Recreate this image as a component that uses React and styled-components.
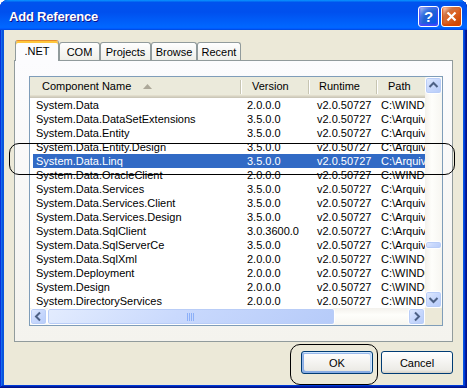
import React from "react";
import styled, { createGlobalStyle, css } from "styled-components";

const GlobalStyle = createGlobalStyle`
  html, body {
    margin: 0;
    padding: 0;
    background: #ffffff;
  }
  body {
    font-family: "Liberation Sans", Arial, sans-serif;
    font-size: 11px;
    color: #000;
    overflow: hidden;
  }
  * {
    box-sizing: border-box;
  }
`;

const Window = styled.div`
  position: relative;
  width: 467px;
  height: 388px;
  display: flex;
  flex-direction: column;
  padding-bottom: 3px;
  background: #0855dd;
  border-radius: 8px 8px 0 0;
  box-shadow: inset -1px -1px #00138c, inset 1px 1px #0831d9,
    inset -2px -2px #001ea0, inset 2px 2px #166aee, inset -3px -3px #003bda,
    inset 3px 3px #0855dd;
`;

const TitleBar = styled.div`
  flex: none;
  height: 30px;
  display: flex;
  align-items: center;
  padding: 2px 5px 0 9px;
  border-radius: 8px 8px 0 0;
  background: linear-gradient(
    180deg,
    #0997ff,
    #0053ee 8%,
    #0050ee 40%,
    #0066ff 88%,
    #0066ff 93%,
    #005bff 95%,
    #0047d9 100%
  );
`;

const Title = styled.div`
  flex: 1;
  color: #fff;
  font: bold 13px "Liberation Sans", Arial, sans-serif;
  text-shadow: 1px 1px #0f1089;
  letter-spacing: -0.2px;
`;

const TitleButtons = styled.div`
  display: flex;
  gap: 2px;
`;

const CaptionButton = styled.div`
  width: 21px;
  height: 21px;
  border: 1px solid #fff;
  border-radius: 3px;
  display: flex;
  align-items: center;
  justify-content: center;
  color: #fff;
  font: bold 15px "Liberation Sans", Arial, sans-serif;
  ${(p) =>
    p.$close
      ? css`
          background: radial-gradient(circle at 90% 90%, #cc4600 0, #dc6527 55%, #cd7546 70%, #ffccb2 90%, #fff 100%);
          box-shadow: inset 0 -1px 2px 1px #da4600;
        `
      : css`
          background: radial-gradient(circle at 90% 90%, #0054e9 0, #2263d5 55%, #4479e4 70%, #a3bbec 90%, #fff 100%);
          box-shadow: inset 0 -1px 2px 1px #4646ff;
        `}
`;

const Body = styled.div`
  flex: 1;
  margin: 0 4px;
  padding: 10px 10px 11px;
  display: flex;
  flex-direction: column;
  background: #ece9d8;
`;

const TabStrip = styled.div`
  position: relative;
  z-index: 1;
  height: 20px;
  display: flex;
  align-items: flex-end;
  padding-left: 1px;
`;

const Tab = styled.div`
  width: ${(p) => p.$width}px;
  height: ${(p) => (p.$active ? 21 : 18)}px;
  margin-bottom: ${(p) => (p.$active ? -1 : 0)}px;
  display: flex;
  align-items: center;
  justify-content: center;
  border: 1px solid #919b9c;
  border-bottom: none;
  border-radius: 3px 3px 0 0;
  white-space: nowrap;
  ${(p) =>
    p.$active
      ? css`
          border-top-color: #e68b2c;
          background: #fcfcfe;
          box-shadow: inset 0 2px #ffc73c;
          padding-bottom: 1px;
        `
      : css`
          background: linear-gradient(180deg, #fff, #fafaf9 26%, #f0f0ea 95%, #ecebe5);
          padding-top: 1px;
        `}
`;

const TabPanel = styled.div`
  height: 282px;
  border: 1px solid #919b9c;
  background: linear-gradient(180deg, #fcfcfe, #f4f3ee);
  padding: 15px 10px 15px 14px;
`;

const ListView = styled.div`
  width: 414px;
  height: 250px;
  border: 1px solid #7f9db9;
  background: #fff;
  display: grid;
  grid-template-columns: 395px 17px;
  grid-template-rows: 231px 17px;
`;

const Content = styled.div`
  overflow: hidden;
`;

const Header = styled.div`
  height: 21px;
  display: flex;
  background: #ebeadb;
  box-shadow: inset 0 -1px #cbc7b8, inset 0 -2px #d6d2c2, inset 0 -3px #e2decd;
`;

const HeaderCell = styled.div`
  position: relative;
  flex: none;
  width: ${(p) => p.$width}px;
  height: 18px;
  display: flex;
  align-items: center;
  padding-left: ${(p) => p.$pad}px;
  white-space: nowrap;
  &::after {
    content: "";
    position: absolute;
    right: 1px;
    top: 3px;
    bottom: 1px;
    width: 1px;
    background: #c7c5b2;
    box-shadow: 1px 0 #fff;
  }
`;

const SortArrow = styled.svg`
  margin-left: 12px;
`;

const Row = styled.div`
  height: 14px;
  margin-left: 3px;
  display: flex;
  line-height: 14px;
  white-space: nowrap;
  ${(p) =>
    p.$selected &&
    css`
      background: #316ac5;
      color: #fff;
    `}
`;

const Cell = styled.div`
  flex: none;
  width: ${(p) => p.$width}px;
  padding-left: ${(p) => p.$pad}px;
  overflow: hidden;
`;

const VScroll = styled.div`
  display: flex;
  flex-direction: column;
  background: linear-gradient(90deg, #f3f1ec, #fefefb 40%, #f7f6f1);
`;

const HScroll = styled.div`
  display: flex;
  background: linear-gradient(180deg, #f3f1ec, #fefefb 40%, #f7f6f1);
`;

const Track = styled.div`
  flex: 1;
  display: flex;
  flex-direction: ${(p) => (p.$vertical ? "column" : "row")};
`;

const blueKnob = css`
  border: 1px solid #fff;
  border-radius: 3px;
  background: linear-gradient(135deg, #e3ecfe 0%, #c9d9fd 45%, #b6cbf9 100%);
  box-shadow: inset 0 0 0 1px #b9cdf7;
`;

const ArrowButton = styled.div`
  flex: none;
  width: 17px;
  height: 17px;
  display: flex;
  align-items: center;
  justify-content: center;
  ${blueKnob}
`;

const Thumb = styled.div`
  flex: none;
  display: flex;
  align-items: center;
  justify-content: center;
  ${blueKnob}
  ${(p) =>
    p.$vertical
      ? css`
          width: 17px;
          height: ${p.$size}px;
          margin-top: ${p.$offset}px;
        `
      : css`
          height: 17px;
          width: ${p.$size}px;
          margin-left: ${p.$offset}px;
        `}
`;

const Grip = styled.svg`
  display: block;
`;

const Corner = styled.div`
  background: #ece9d8;
`;

const ButtonRow = styled.div`
  margin-top: 9px;
  display: flex;
  justify-content: flex-end;
  gap: 8px;
`;

const Button = styled.button`
  width: 72px;
  height: 23px;
  padding: 0;
  font: 11px "Liberation Sans", Arial, sans-serif;
  color: #000;
  border: 1px solid #003c74;
  border-radius: 3px;
  background: linear-gradient(180deg, #fff, #ecebe6 86%, #d6d0c5);
  ${(p) =>
    p.$default &&
    css`
      box-shadow: inset -1px 1px #cee7ff, inset 1px 2px #98b8ea,
        inset -2px 2px #bcd4f6, inset 1px -1px #89ade4, inset 2px -2px #89ade4;
    `}
`;

const Callout = styled.div`
  position: absolute;
  left: ${(p) => p.$x}px;
  top: ${(p) => p.$y}px;
  width: ${(p) => p.$w}px;
  height: ${(p) => p.$h}px;
  border: 1px solid #000;
  border-radius: ${(p) => p.$r}px;
  pointer-events: none;
`;

const tabs = [
  { label: ".NET", width: 44, active: true },
  { label: "COM", width: 41 },
  { label: "Projects", width: 51 },
  { label: "Browse", width: 46 },
  { label: "Recent", width: 44 },
];

const columns = [
  { title: "Component Name", width: 212, head: 12, pad: 3 },
  { title: "Version", width: 68, head: 10, pad: 5 },
  { title: "Runtime", width: 68, head: 9, pad: 7 },
  { title: "Path", width: 120, head: 10, pad: 3 },
];

const WIN = "C:\\WINDOWS\\Microsoft.NET\\Framework\\v2.0.50727";
const ARQ = "C:\\Arquivos de programas\\Reference Assemblies";

const rows = [
  ["System.Data", "2.0.0.0", WIN],
  ["System.Data.DataSetExtensions", "3.5.0.0", ARQ],
  ["System.Data.Entity", "3.5.0.0", ARQ],
  ["System.Data.Entity.Design", "3.5.0.0", ARQ],
  ["System.Data.Linq", "3.5.0.0", ARQ, true],
  ["System.Data.OracleClient", "2.0.0.0", WIN],
  ["System.Data.Services", "3.5.0.0", ARQ],
  ["System.Data.Services.Client", "3.5.0.0", ARQ],
  ["System.Data.Services.Design", "3.5.0.0", ARQ],
  ["System.Data.SqlClient", "3.0.3600.0", ARQ],
  ["System.Data.SqlServerCe", "3.5.0.0", ARQ],
  ["System.Data.SqlXml", "2.0.0.0", WIN],
  ["System.Deployment", "2.0.0.0", WIN],
  ["System.Design", "2.0.0.0", WIN],
  ["System.DirectoryServices", "2.0.0.0", WIN],
];

const arrows = {
  up: "4.5,10 8.5,6 12.5,10",
  down: "4.5,7 8.5,11 12.5,7",
  left: "10,4.5 6,8.5 10,12.5",
  right: "7,4.5 11,8.5 7,12.5",
};

const Arrow = ({ dir }) => (
  <ArrowButton>
    <svg width="15" height="15" viewBox="1 1 15 15">
      <polyline points={arrows[dir]} fill="none" stroke="#4d6185" strokeWidth="2" />
    </svg>
  </ArrowButton>
);

const GripLines = ({ vertical }) => (
  <Grip width={vertical ? 8 : 8} height={vertical ? 4 : 8} viewBox={vertical ? "0 0 8 4" : "0 0 8 8"}>
    {[0, 2, 4, 6].map((i) =>
      vertical ? (
        <line key={i} x1="0" x2="8" y1={i * 0.5 + 0.5} y2={i * 0.5 + 0.5} stroke="#8cb0f8" />
      ) : (
        <line key={i} y1="0" y2="8" x1={i + 0.5} x2={i + 0.5} stroke={i % 2 ? "#fff" : "#8cb0f8"} />
      )
    )}
  </Grip>
);

export default function App() {
  return (
    <>
      <GlobalStyle />
      <Window>
        <TitleBar>
          <Title>Add Reference</Title>
          <TitleButtons>
            <CaptionButton>?</CaptionButton>
            <CaptionButton $close>
              <svg width="11" height="11" viewBox="0 0 11 11">
                <path d="M1.5 1.5 L9.5 9.5 M9.5 1.5 L1.5 9.5" stroke="#fff" strokeWidth="2.2" />
              </svg>
            </CaptionButton>
          </TitleButtons>
        </TitleBar>

        <Body>
          <TabStrip>
            {tabs.map((t) => (
              <Tab key={t.label} $width={t.width} $active={t.active}>
                {t.label}
              </Tab>
            ))}
          </TabStrip>
          <TabPanel>
            <ListView>
              <Content>
                <Header>
                  {columns.map((c, i) => (
                    <HeaderCell key={c.title} $width={c.width} $pad={c.head}>
                      {c.title}
                      {i === 0 && (
                        <SortArrow width="9" height="5" viewBox="0 0 9 5">
                          <polygon points="0,5 4.5,0 9,5" fill="#aca899" />
                        </SortArrow>
                      )}
                    </HeaderCell>
                  ))}
                </Header>
                {rows.map(([name, version, path, selected]) => (
                  <Row key={name} $selected={selected}>
                    <Cell $width={columns[0].width - 3} $pad={columns[0].pad}>{name}</Cell>
                    <Cell $width={columns[1].width} $pad={columns[1].pad}>{version}</Cell>
                    <Cell $width={columns[2].width} $pad={columns[2].pad}>v2.0.50727</Cell>
                    <Cell $width={columns[3].width} $pad={columns[3].pad}>{path}</Cell>
                  </Row>
                ))}
              </Content>
              <VScroll>
                <Arrow dir="up" />
                <Track $vertical>
                  <Thumb $vertical $size={8} $offset={147} />
                </Track>
                <Arrow dir="down" />
              </VScroll>
              <HScroll>
                <Arrow dir="left" />
                <Track>
                  <Thumb $size={288} $offset={0}>
                    <GripLines />
                  </Thumb>
                </Track>
                <Arrow dir="right" />
              </HScroll>
              <Corner />
            </ListView>
          </TabPanel>
          <ButtonRow>
            <Button $default>OK</Button>
            <Button>Cancel</Button>
          </ButtonRow>
        </Body>

        <Callout $x={9} $y={143} $w={446} $h={32} $r={10} />
        <Callout $x={290} $y={344} $w={88} $h={41} $r={10} />
      </Window>
    </>
  );
}
